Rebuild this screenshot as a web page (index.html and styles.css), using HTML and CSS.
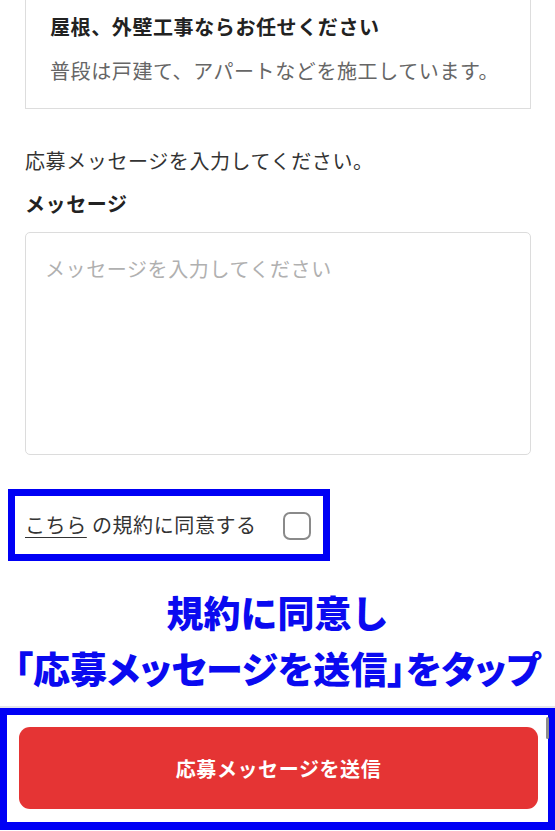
FILE: index.html
```html
<!DOCTYPE html>
<html lang="ja">
<head>
<meta charset="utf-8">
<title>応募メッセージ</title>
<link rel="stylesheet" href="styles.css">
</head>
<body>
<div class="page">
  <div class="card">
    <div class="card-title">屋根、外壁工事ならお任せください</div>
    <div class="card-desc">普段は戸建て、アパートなどを施工しています。</div>
  </div>

  <p class="lead">応募メッセージを入力してください。</p>
  <div class="label">メッセージ</div>
  <textarea class="message" placeholder="メッセージを入力してください"></textarea>

  <div class="agree">
    <span class="agree-text"><a class="agree-link">こちら</a> の規約に同意する</span>
    <span class="checkbox"></span>
  </div>
</div>

<div class="banner">
  <div class="banner-line">規約に同意し</div>
  <div class="banner-line narrow">「応募メッセージを送信」をタップ</div>
</div>

<div class="footer">
  <div class="footer-frame">
    <button class="submit">応募メッセージを送信</button>
    <span class="scroll-thumb"></span>
  </div>
</div>
</body>
</html>
```

FILE: styles.css
```css
html, body {
  margin: 0;
  padding: 0;
  background: #ffffff;
}

body {
  font-family: "Noto Sans CJK JP", "Noto Sans", sans-serif;
  font-size: 20px;
  line-height: 30px;
  letter-spacing: 0.6px;
  color: #333333;
  width: 555px;
  overflow: hidden;
}

.page {
  padding: 0 24px 0 25px;
}

.card {
  border: 1px solid #dddddd;
  border-top: none;
  padding: 12px 24px 22px 24px;
}

.card-title {
  font-weight: 700;
  color: #222222;
}

.card-desc {
  margin-top: 14px;
  color: #666666;
}

.lead {
  margin: 37px 0 0 0;
  color: #333333;
}

.label {
  margin-top: 13px;
  font-weight: 700;
  color: #222222;
}

.message {
  display: block;
  box-sizing: border-box;
  width: 100%;
  height: 223px;
  margin: 13px 0 0 0;
  padding: 21px 19px;
  border: 1px solid #dcdcdc;
  border-radius: 5px;
  font-family: inherit;
  font-size: 20px;
  line-height: 30px;
  letter-spacing: 0.6px;
  resize: none;
  background: #ffffff;
  color: #333333;
  outline: none;
}

.message::placeholder {
  color: #b0b0b0;
}

.agree {
  box-sizing: border-box;
  display: flex;
  align-items: center;
  width: 322px;
  height: 72px;
  margin: 34px 0 0 -17px;
  padding: 0 12px 0 10px;
  border: 7px solid #0000f5;
  justify-content: space-between;
}

.agree-text {
  color: #333333;
}

.agree-link {
  color: #333333;
  text-decoration: underline;
  text-underline-offset: 4px;
  text-decoration-thickness: 1px;
}

.checkbox {
  box-sizing: border-box;
  width: 28px;
  height: 28px;
  border: 2px solid #8a8a8a;
  border-radius: 7px;
  margin-top: 2px;
}

.banner {
  margin-top: 23px;
  text-align: center;
  color: #0a0af0;
  font-weight: 900;
  font-size: 37px;
  line-height: 56px;
  letter-spacing: 0;
}

.banner-line.narrow {
  font-feature-settings: "palt";
  white-space: nowrap;
}

.footer {
  margin-top: 10px;
  border-top: 2px solid #e4e4ea;
}

.footer-frame {
  position: relative;
  box-sizing: border-box;
  border: 7px solid #0000f5;
  border-bottom-width: 8px;
  padding: 12px 10px 13px 12px;
}

.submit {
  display: block;
  width: 100%;
  height: 82px;
  border: none;
  border-radius: 11px;
  background: #e53434;
  color: #ffffff;
  font-family: inherit;
  font-size: 20px;
  font-weight: 700;
  letter-spacing: 0.6px;
}

.scroll-thumb {
  position: absolute;
  top: 2px;
  right: -1px;
  width: 3px;
  height: 22px;
  background: #8c8c8c;
  border-radius: 2px;
}
```
